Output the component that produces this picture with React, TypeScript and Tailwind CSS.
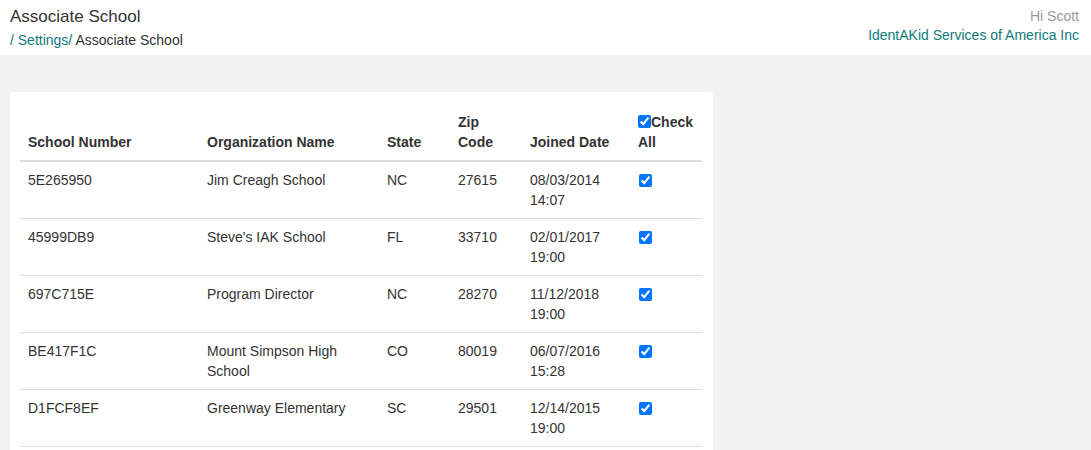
import React from "react";

const rows = [
  { num: "5E265950", org: "Jim Creagh School", state: "NC", zip: "27615", date: "08/03/2014", time: "14:07" },
  { num: "45999DB9", org: "Steve's IAK School", state: "FL", zip: "33710", date: "02/01/2017", time: "19:00" },
  { num: "697C715E", org: "Program Director", state: "NC", zip: "28270", date: "11/12/2018", time: "19:00" },
  { num: "BE417F1C", org: "Mount Simpson High School", state: "CO", zip: "80019", date: "06/07/2016", time: "15:28" },
  { num: "D1FCF8EF", org: "Greenway Elementary", state: "SC", zip: "29501", date: "12/14/2015", time: "19:00" },
];

export default function App() {
  return (
    <div
      className="min-h-[450px] bg-[#f2f2f2] text-[14px] leading-[20px] text-[#333]"
      style={{ fontFamily: '"Liberation Sans", Arial, sans-serif' }}
    >
      <header className="flex h-[55px] items-start justify-between bg-white pl-[10px] pr-[12px]">
        <div className="flex flex-col">
          <div className="mt-[6px] text-[17px] leading-[22px] text-[#333]">Associate School</div>
          <div className="mt-[2px] text-[14px] leading-[20px]">
            <span className="text-[#0e7a7b]">/ Settings/</span>
            <span className="text-[#333]"> Associate School</span>
          </div>
        </div>
        <div className="mt-[7px] flex flex-col items-end">
          <div className="text-[14px] leading-[19px] text-[#999]">Hi Scott</div>
          <div className="text-[14px] leading-[19px] text-[#0e7a7b]">IdentAKid Services of America Inc</div>
        </div>
      </header>

      <div className="pl-[10px] pt-[37px]">
        <div className="w-[703px] rounded-[4px] bg-white px-[10px] pb-[10px] pt-[12px]">
          <table className="w-[682px] table-fixed border-collapse">
            <colgroup>
              <col className="w-[179px]" />
              <col className="w-[180px]" />
              <col className="w-[71px]" />
              <col className="w-[72px]" />
              <col className="w-[108px]" />
              <col className="w-[72px]" />
            </colgroup>
            <thead>
              <tr className="border-b-2 border-[#ddd]">
                <th className="p-[8px] text-left align-bottom font-bold">School Number</th>
                <th className="p-[8px] text-left align-bottom font-bold">Organization Name</th>
                <th className="p-[8px] text-left align-bottom font-bold">State</th>
                <th className="p-[8px] text-left align-bottom font-bold">Zip Code</th>
                <th className="p-[8px] text-left align-bottom font-bold">Joined Date</th>
                <th className="p-[8px] text-left align-bottom font-bold">
                  <input
                    type="checkbox"
                    defaultChecked
                    className="m-0 inline-block h-[13px] w-[13px] align-[-1px] accent-[#0075ff]"
                  />
                  Check All
                </th>
              </tr>
            </thead>
            <tbody>
              {rows.map((r) => (
                <tr key={r.num} className="border-b border-[#ddd]">
                  <td className="p-[8px] align-top">{r.num}</td>
                  <td className="p-[8px] align-top">{r.org}</td>
                  <td className="p-[8px] align-top">{r.state}</td>
                  <td className="p-[8px] align-top">{r.zip}</td>
                  <td className="p-[8px] align-top">
                    {r.date}
                    <br />
                    {r.time}
                  </td>
                  <td className="p-[8px] align-top">
                    <input
                      type="checkbox"
                      defaultChecked
                      className="m-0 ml-[1px] mt-[4px] block h-[13px] w-[13px] accent-[#0075ff]"
                    />
                  </td>
                </tr>
              ))}
            </tbody>
          </table>
        </div>
      </div>
    </div>
  );
}
